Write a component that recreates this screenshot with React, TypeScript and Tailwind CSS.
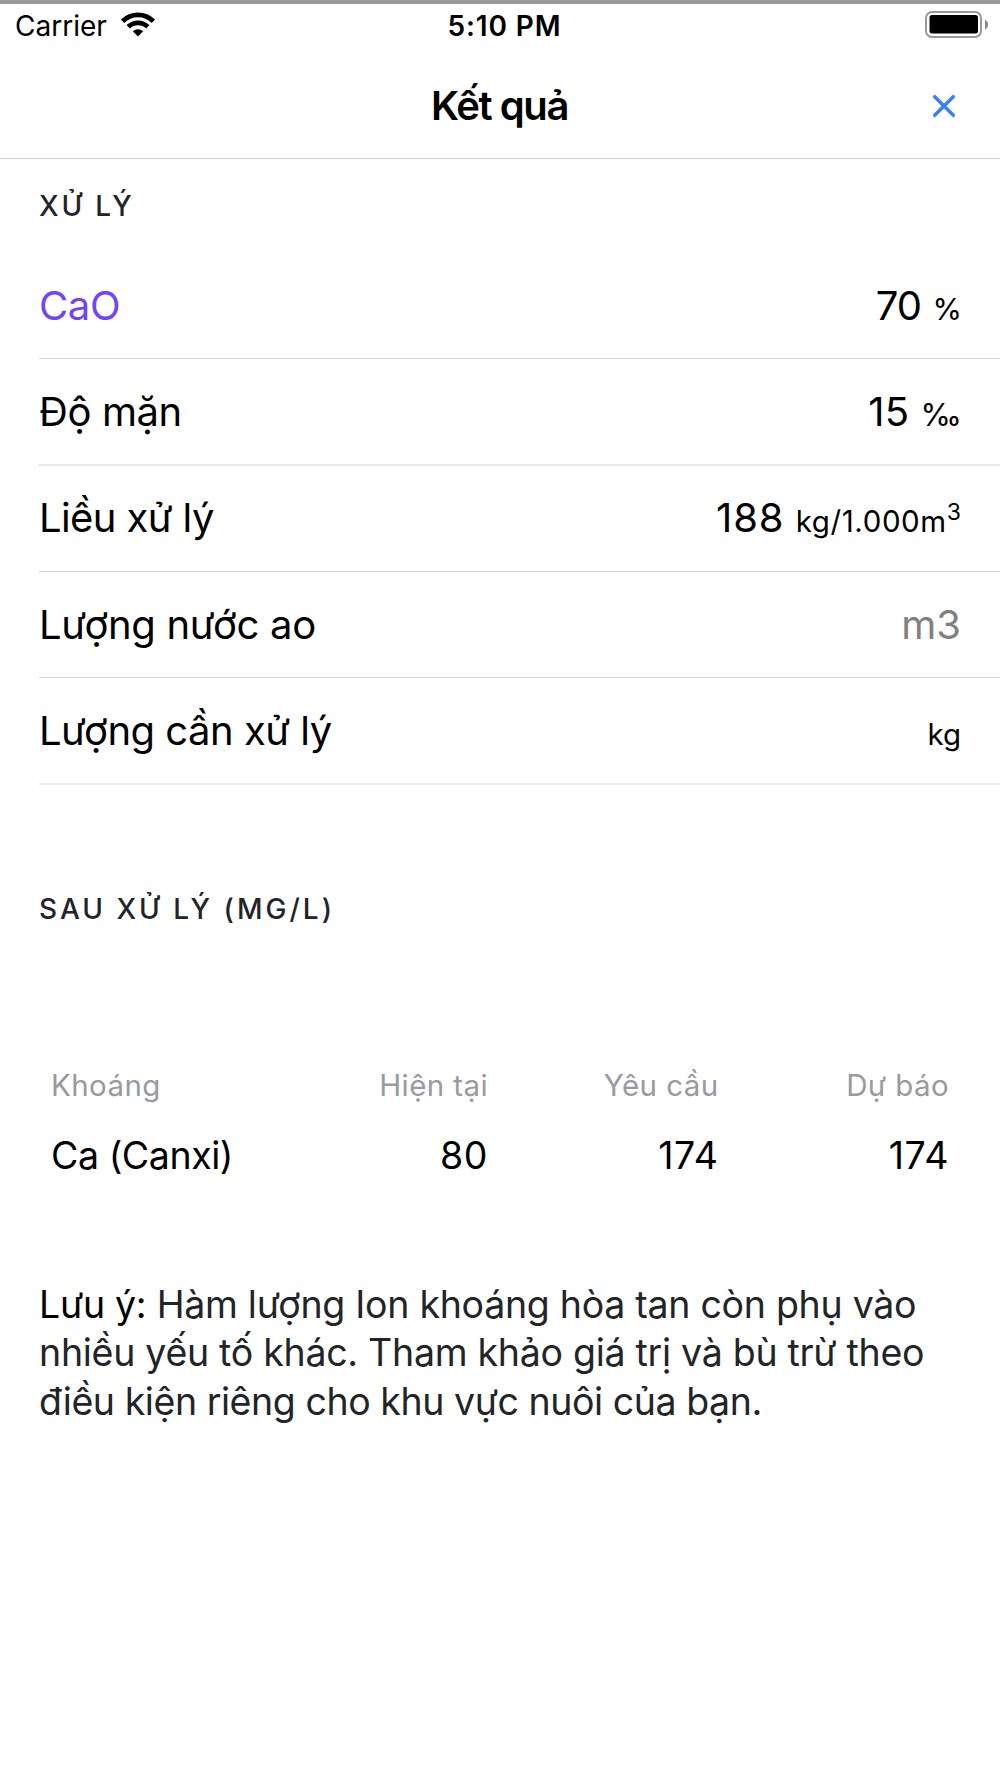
import React from 'react';

interface ResultRow {
  label: string;
  value?: string;
  unit: string;
  sup?: string;
  placeholder?: boolean;
  rowClass: string;
  labelClass: string;
  valueClass?: string;
  unitClass?: string;
}

const rows: ResultRow[] = [
  {
    label: 'CaO',
    value: '70',
    unit: '%',
    rowClass: 'h-[106px] border-b border-[#d4d4d4]',
    labelClass: 'tracking-[-0.4px] text-[#7044ff]',
    valueClass: 'tracking-[-0.8px]',
    unitClass: 'text-[30px] -mr-[1px]',
  },
  {
    label: 'Độ mặn',
    value: '15',
    unit: '‰',
    rowClass: 'h-[107px] border-b-2 border-[#e8e8e8]',
    labelClass: 'tracking-[-0.4px]',
    valueClass: 'tracking-[0.2px]',
    unitClass: 'text-[31px] -mr-[1px]',
  },
  {
    label: 'Liều xử lý',
    value: '188',
    unit: 'kg/1.000m',
    sup: '3',
    rowClass: 'h-[106px] border-b border-[#d4d4d4] pb-[2px]',
    labelClass: 'tracking-[-0.6px]',
    valueClass: 'tracking-[0.9px]',
    unitClass: 'text-[29.5px] tracking-[0.6px]',
  },
  {
    label: 'Lượng nước ao',
    unit: 'm3',
    placeholder: true,
    rowClass: 'h-[106px] border-b border-[#d4d4d4]',
    labelClass: 'tracking-[-0.3px]',
  },
  {
    label: 'Lượng cần xử lý',
    unit: 'kg',
    rowClass: 'h-[107px] border-b-2 border-[#e8e8e8]',
    labelClass: 'tracking-[-0.5px]',
    unitClass: 'text-[29.5px]',
  },
];

const columns = ['Khoáng', 'Hiện tại', 'Yêu cầu', 'Dự báo'];
const minerals = [['Ca (Canxi)', '80', '174', '174']];

function StatusBar() {
  return (
    <div className="flex h-[44px] items-start justify-between border-t-4 border-[#999] text-[28px] leading-[44px]">
      <div className="flex w-[200px] gap-[14px] pl-[15px]">
        <span>Carrier</span>
        <svg className="mt-[8px] h-[25px] w-[34px]" viewBox="0 0 34 25">
          <path d="M17 24.5l5.2-5.2a7.6 7.6 0 0 0-10.4 0z" />
          <path d="M7.2 14.8a14 14 0 0 1 19.6 0" fill="none" stroke="#000" strokeWidth="4.8" />
          <path d="M1.6 9.2a22 22 0 0 1 30.8 0" fill="none" stroke="#000" strokeWidth="4.8" />
        </svg>
      </div>
      <span className="pl-[9px] font-semibold tracking-[0.9px]">5:10 PM</span>
      <div className="flex w-[200px] justify-end pr-[11px]">
        <svg className="mt-[7px] h-[27px] w-[64px]" viewBox="0 0 64 27">
          <rect x="1" y="1" width="55" height="25" rx="6" fill="none" stroke="#999" strokeWidth="2" />
          <rect x="4.5" y="4" width="48.5" height="18.5" rx="2.5" />
          <path d="M60 8.5q3 1.5 3 5t-3 5z" fill="#888" />
        </svg>
      </div>
    </div>
  );
}

function Header() {
  return (
    <header className="flex h-[115px] items-center justify-between border-b border-[#d0d0d0] px-[43px]">
      <span className="w-[24px]" />
      <h1 className="pt-[9px] text-[40px] font-semibold tracking-[-1.4px]">Kết quả</h1>
      <button aria-label="Đóng" className="pr-[1px]">
        <svg className="mt-[9px] h-[24px] w-[24px]" viewBox="0 0 24 24" stroke="#3880ff" strokeWidth="3.5" strokeLinecap="round">
          <path d="M2.7 2.7l18.6 18.6M21.3 2.7l-18.6 18.6" />
        </svg>
      </button>
    </header>
  );
}

function Row({ row }: { row: ResultRow }) {
  return (
    <div className={`ml-[39px] flex items-center justify-between pr-[39px] text-[40px] whitespace-nowrap ${row.rowClass}`}>
      <span className={row.labelClass}>{row.label}</span>
      {row.placeholder ? (
        <span className="text-[#808080]">{row.unit}</span>
      ) : (
        <span>
          <span className={row.valueClass}>{row.value}</span>{' '}
          <span className={row.unitClass}>
            {row.unit}
            {row.sup && <sup className="text-[23px] tracking-normal">{row.sup}</sup>}
          </span>
        </span>
      )}
    </div>
  );
}

export default function App() {
  return (
    <div className="h-[1778px] w-[1000px] overflow-hidden bg-white font-['Inter','Liberation_Sans',sans-serif] text-black">
      <StatusBar />
      <Header />

      <h2 className="h-[94px] pt-[26px] pl-[39px] text-[28px] leading-[42px] font-[450] tracking-[2.8px] text-[#222428]">XỬ LÝ</h2>
      {rows.map((row) => (
        <Row key={row.label} row={row} />
      ))}

      <h2 className="mt-[103px] pl-[39px] text-[28px] leading-[42px] font-[450] tracking-[3px] text-[#222428]">SAU XỬ LÝ (MG/L)</h2>

      <div className="mx-[39px] mt-[125px]">
        <div className="grid grid-cols-4 text-[29.5px] leading-[60px] tracking-[0.4px] text-[#989aa2]">
          {columns.map((column) => (
            <span key={column} className="px-[12px] text-right first:text-left">{column}</span>
          ))}
        </div>
        {minerals.map((cells) => (
          <div key={cells[0]} className="mt-[9px] grid grid-cols-4 text-[37.5px] leading-[64px]">
            {cells.map((cell, i) => (
              <span key={i} className="px-[12px] text-right tracking-[0.6px] first:text-left first:tracking-[-0.45px]">{cell}</span>
            ))}
          </div>
        ))}
      </div>

      <p className="mt-[93px] pl-[39px] text-[37.5px] leading-[48.4px] tracking-[-0.28px] whitespace-nowrap text-[#222428]">
        <span className="text-black">Lưu ý:</span> Hàm lượng Ion khoáng hòa tan còn phụ vào
        <br />
        nhiều yếu tố khác. Tham khảo giá trị và bù trừ theo
        <br />
        <span className="tracking-[-0.44px]">điều kiện riêng cho khu vực nuôi của bạn.</span>
      </p>
    </div>
  );
}
